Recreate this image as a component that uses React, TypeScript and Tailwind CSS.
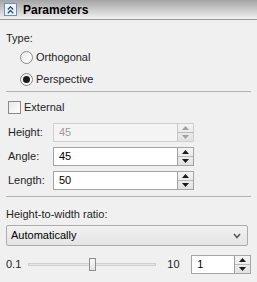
import React from 'react';

function Spinner({ disabled = false }: { disabled?: boolean }) {
  const tri = disabled ? 'fill-[#a0a0a0]' : 'fill-[#1a1a1a]';
  return (
    <div
      className={`flex flex-col w-[16px] h-full border-l ${
        disabled ? 'border-[#c8c8c8]' : 'border-[#a0a0a0]'
      } bg-gradient-to-b from-[#f4f4f4] to-[#e2e2e2]`}
    >
      <div className="flex-1 flex items-center justify-center border-b border-[#b8b8b8]">
        <svg width="7" height="4" viewBox="0 0 7 4">
          <polygon points="3.5,0 7,4 0,4" className={tri} />
        </svg>
      </div>
      <div className="flex-1 flex items-center justify-center">
        <svg width="7" height="4" viewBox="0 0 7 4">
          <polygon points="0,0 7,0 3.5,4" className={tri} />
        </svg>
      </div>
    </div>
  );
}

function SpinField({ label, value, disabled = false }: { label: string; value: string; disabled?: boolean }) {
  return (
    <div className="flex items-center h-[19px]">
      <span className="w-[45px] text-[#1e1e1e]">{label}</span>
      <div
        className={`flex w-[141px] h-full border ${
          disabled ? 'border-[#cfcfcf] bg-[#f4f4f4]' : 'border-[#a4a4a4] bg-white'
        }`}
      >
        <span className={`flex-1 pl-[5px] leading-[17px] ${disabled ? 'text-[#9a9a9a]' : 'text-black'}`}>
          {value}
        </span>
        <Spinner disabled={disabled} />
      </div>
    </div>
  );
}

function Radio({ label, checked }: { label: string; checked?: boolean }) {
  return (
    <div className="flex items-center gap-[3px] pl-[14px] h-[14px]">
      <div className="w-[13px] h-[13px] rounded-full border border-[#8a8a8a] bg-gradient-to-br from-[#e8e8e8] to-white flex items-center justify-center">
        {checked && <div className="w-[7px] h-[7px] rounded-full bg-[#1a1a1a]" />}
      </div>
      <span>{label}</span>
    </div>
  );
}

export default function App() {
  return (
    <div
      className="w-[257px] h-[282px] bg-[#f0f0f0] text-[11px] text-[#1e1e1e] overflow-hidden"
      style={{ fontFamily: '"Liberation Sans", Arial, sans-serif' }}
    >
      <div className="h-[20px] flex items-center gap-[6px] pl-[4px] bg-gradient-to-b from-[#a4a4a4] to-[#f2f2f2] border-b border-[#979797]">
        <div className="w-[13px] h-[13px] border border-[#6d8fb8] bg-[#eef3fa] flex items-center justify-center">
          <svg width="7" height="8" viewBox="0 0 7 8" fill="none" stroke="#23507f" strokeWidth="1.3">
            <polyline points="0.8,3.5 3.5,0.8 6.2,3.5" />
            <polyline points="0.8,7.2 3.5,4.5 6.2,7.2" />
          </svg>
        </div>
        <span className="font-bold text-[12px] text-black">Parameters</span>
      </div>

      <div className="pl-[6px] pr-[6px]">
        <div className="mt-[11px] h-[14px] leading-[14px]">Type:</div>
        <div className="mt-[5px] flex flex-col gap-[8px]">
          <Radio label="Orthogonal" />
          <Radio label="Perspective" checked />
        </div>

        <div className="mt-[5px] border-t border-[#b4b4b4]" />

        <div className="mt-[8px] flex items-center gap-[3px] pl-[2px] h-[14px]">
          <div className="w-[13px] h-[13px] border border-[#8a8a8a] bg-gradient-to-br from-[#e8e8e8] to-white" />
          <span>External</span>
        </div>

        <div className="mt-[9px] flex flex-col gap-[5px] pl-[2px]">
          <SpinField label="Height:" value="45" disabled />
          <SpinField label="Angle:" value="45" />
          <SpinField label="Length:" value="50" />
        </div>

        <div className="mt-[6px] border-t border-[#b4b4b4]" />

        <div className="mt-[10px] h-[14px] leading-[14px]">Height-to-width ratio:</div>

        <div className="mt-[4px] h-[21px] w-[242px] flex items-center justify-between pl-[4px] pr-[6px] border border-[#acacac] rounded-[2px] bg-gradient-to-b from-[#f2f2f2] to-[#e4e4e4]">
          <span className="text-black">Automatically</span>
          <svg width="8" height="6" viewBox="0 0 8 6" fill="none" stroke="#5a5a5a" strokeWidth="1.6">
            <polyline points="1,1 4,4.5 7,1" />
          </svg>
        </div>

        <div className="mt-[9px] flex items-center h-[19px]">
          <span className="w-[22px]">0.1</span>
          <div className="relative w-[129px] h-[13px] flex items-center">
            <div className="w-full h-[3px] border border-[#d0d0d0] bg-[#e6e6e6]" />
            <div className="absolute left-[61px] top-0 w-[7px] h-[13px] border border-[#8e8e8e] bg-gradient-to-b from-[#f8f8f8] to-[#e4e4e4]" />
          </div>
          <span className="ml-[11px] w-[24px]">10</span>
          <div className="flex w-[60px] h-full border border-[#a4a4a4] bg-white">
            <span className="flex-1 pl-[5px] leading-[17px] text-black">1</span>
            <Spinner />
          </div>
        </div>
      </div>
    </div>
  );
}
